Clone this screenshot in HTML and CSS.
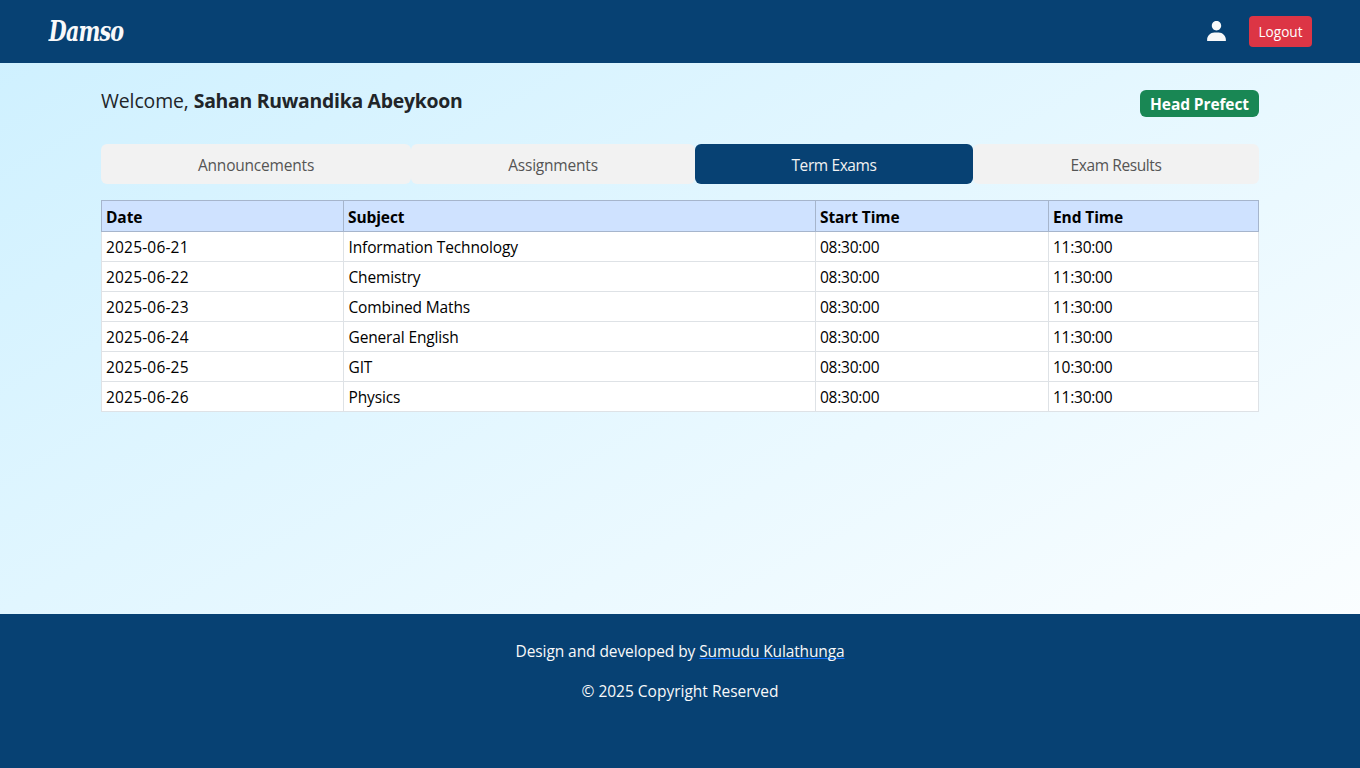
FILE: index.html
```html
<!DOCTYPE html>
<html lang="en">
<head>
<meta charset="utf-8">
<title>Damso</title>
<link rel="stylesheet" href="styles.css">
</head>
<body>
<header class="navbar">
  <a class="brand">Damso</a>
  <div class="actions">
    <svg class="user" viewBox="0 0 24 24" fill="currentColor"><path d="M7.5 6.5C7.5 8.981 9.519 11 12 11s4.5-2.019 4.5-4.5S14.481 2 12 2 7.5 4.019 7.5 6.5zM20 21h1v-1c0-3.859-3.141-7-7-7h-4c-3.86 0-7 3.141-7 7v1h17z"/></svg>
    <button class="logout">Logout</button>
  </div>
</header>
<main class="content">
  <div class="welcome">
    <p class="greeting"><span class="hello">Welcome,</span> <b class="name">Sahan Ruwandika Abeykoon</b></p>
    <span class="badge">Head Prefect</span>
  </div>
  <nav class="tabs">
    <a class="tab">Announcements</a>
    <a class="tab">Assignments</a>
    <a class="tab tight active">Term Exams</a>
    <a class="tab tight">Exam Results</a>
  </nav>
  <table class="exams">
    <colgroup><col class="c-date"><col class="c-subject"><col class="c-start"><col class="c-end"></colgroup>
    <thead><tr><th>Date</th><th>Subject</th><th>Start Time</th><th>End Time</th></tr></thead>
    <tbody>
      <tr><td class="date">2025-06-21</td><td>Information Technology</td><td class="time">08:30:00</td><td class="time">11:30:00</td></tr>
      <tr><td class="date">2025-06-22</td><td>Chemistry</td><td class="time">08:30:00</td><td class="time">11:30:00</td></tr>
      <tr><td class="date">2025-06-23</td><td>Combined Maths</td><td class="time">08:30:00</td><td class="time">11:30:00</td></tr>
      <tr><td class="date">2025-06-24</td><td>General English</td><td class="time">08:30:00</td><td class="time">11:30:00</td></tr>
      <tr><td class="date">2025-06-25</td><td>GIT</td><td class="time">08:30:00</td><td class="time">10:30:00</td></tr>
      <tr><td class="date">2025-06-26</td><td>Physics</td><td class="time">08:30:00</td><td class="time">11:30:00</td></tr>
    </tbody>
  </table>
</main>
<footer class="footer">
  <p class="credit">Design and developed by <a class="author">Sumudu Kulathunga</a></p>
  <p>© 2025 Copyright Reserved</p>
</footer>
</body>
</html>
```
FILE: styles.css
```css
* { box-sizing: border-box; }
body {
  margin: 0;
  height: 768px;
  display: flex;
  flex-direction: column;
  overflow: hidden;
  font-family: "Open Sans", "Noto Sans", sans-serif;
  font-size: 15.5px;
  line-height: 24px;
  color: #212529;
  background: linear-gradient(to bottom right, #cdf0ff, #fff);
}
p { margin: 0; }
.navbar {
  height: 63px;
  padding: 0 48px;
  display: flex;
  align-items: center;
  justify-content: space-between;
  background: #074173;
  color: #f8f9fa;
}
.brand {
  padding-left: 1px;
  font: italic bold 28px "DejaVu Serif Condensed", "DejaVu Serif", serif;
  letter-spacing: -1px;
  transform: scaleX(0.82);
  transform-origin: left;
}
.actions { display: flex; align-items: center; gap: 20px; }
.user { width: 25px; height: 25px; }
.logout {
  height: 31px;
  width: 63px;
  padding: 0;
  border: 0;
  border-radius: 4px;
  background: #dc3545;
  color: #fff;
  font: 13.6px "Open Sans", sans-serif;
}
.content { flex: 1; padding: 23px 101px 0; }
.welcome { display: flex; justify-content: space-between; height: 58px; }
.greeting { font-size: 19.4px; line-height: 30px; }
.hello { letter-spacing: -0.1px; }
.name { letter-spacing: -0.27px; }
.badge {
  margin-top: 4px;
  height: 27px;
  width: 119px;
  border-radius: 6px;
  background: #198754;
  color: #fff;
  font-weight: 700;
  letter-spacing: -0.1px;
  text-align: center;
  line-height: 28px;
}
.tabs { display: grid; grid-template-columns: 310px 284px 278px 286px; margin-bottom: 16px; }
.tab {
  height: 40px;
  border-radius: 6px;
  background: #f2f2f2;
  color: #555;
  letter-spacing: -0.2px;
  text-align: center;
  line-height: 42px;
}
.tab.tight { letter-spacing: -0.4px; }
.tab.active { background: #074173; color: #f2f2f2; }
.exams {
  width: 1158px;
  table-layout: fixed;
  border-collapse: collapse;
  background: #fff;
  color: #000;
}
.c-date { width: 242px; }
.c-subject { width: 472px; }
.c-start { width: 233px; }
.c-end { width: 210px; }
th, td { height: 30px; padding: 0 4px; border: 1px solid #dee2e6; text-align: left; line-height: 24px; }
th { height: 31px; padding-top: 2px; border-color: #a6b5cc; background: #cfe2ff; font-weight: 700; letter-spacing: -0.1px; }
td { padding-left: 4.5px; letter-spacing: -0.14px; }
.date { letter-spacing: 0.18px; padding-left: 4px; }
.time { letter-spacing: -0.25px; padding-left: 4px; }
.footer {
  height: 154px;
  padding-top: 25px;
  display: flex;
  flex-direction: column;
  gap: 16px;
  background: #074173;
  color: #f8f9fa;
  text-align: center;
}
.credit { letter-spacing: -0.08px; }
.author { letter-spacing: -0.13px; text-decoration: underline 1px #0d6efd; text-decoration-skip-ink: none; text-underline-offset: 1px; }
```
